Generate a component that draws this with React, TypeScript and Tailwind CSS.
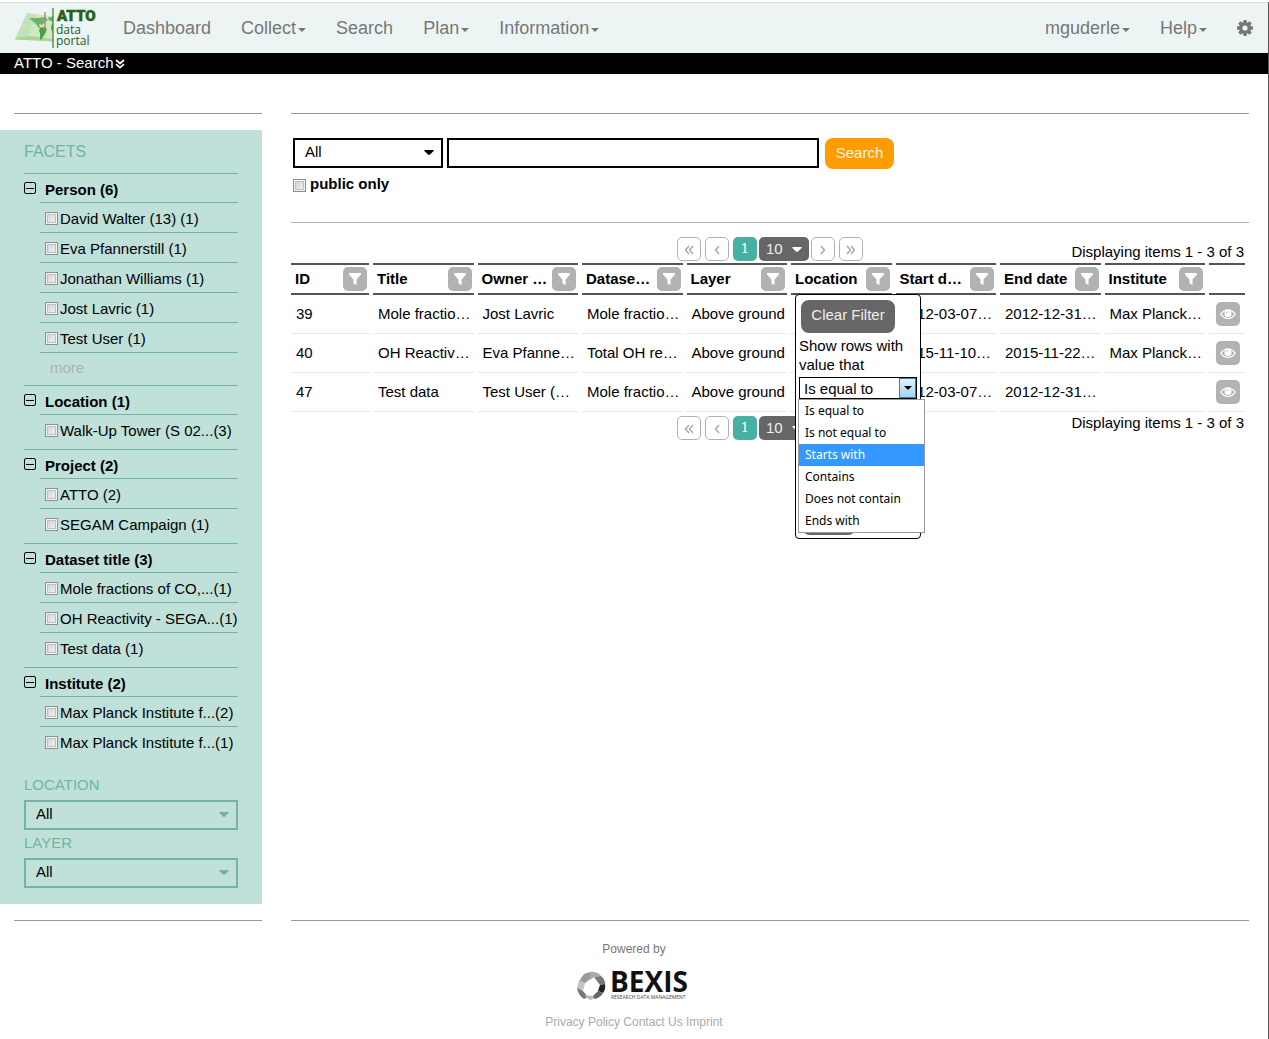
import React from "react";

type Facet = { title: string; items: string[]; more?: boolean };

const facets: Facet[] = [
  {
    title: "Person (6)",
    items: ["David Walter (13) (1)", "Eva Pfannerstill (1)", "Jonathan Williams (1)", "Jost Lavric (1)", "Test User (1)"],
    more: true,
  },
  { title: "Location (1)", items: ["Walk-Up Tower (S 02...(3)"] },
  { title: "Project (2)", items: ["ATTO (2)", "SEGAM Campaign (1)"] },
  { title: "Dataset title (3)", items: ["Mole fractions of CO,...(1)", "OH Reactivity - SEGA...(1)", "Test data (1)"] },
  { title: "Institute (2)", items: ["Max Planck Institute f...(2)", "Max Planck Institute f...(1)"] },
];

const columns = ["ID", "Title", "Owner …", "Datase…", "Layer", "Location", "Start d…", "End date", "Institute"];

const rows = [
  ["39", "Mole fractio…", "Jost Lavric", "Mole fractio…", "Above ground", "", "2012-03-07…", "2012-12-31…", "Max Planck…"],
  ["40", "OH Reactiv…", "Eva Pfanne…", "Total OH re…", "Above ground", "", "2015-11-10…", "2015-11-22…", "Max Planck…"],
  ["47", "Test data", "Test User (…", "Mole fractio…", "Above ground", "", "2012-03-07…", "2012-12-31…", ""],
];

const operators = ["Is equal to", "Is not equal to", "Starts with", "Contains", "Does not contain", "Ends with"];

function Caret({ className = "" }: { className?: string }) {
  return (
    <svg viewBox="0 0 8 4" className={`h-1 w-2 fill-current ${className}`} aria-hidden="true">
      <path d="M0 0h8L4 4z" />
    </svg>
  );
}

function WideCaret({ className = "" }: { className?: string }) {
  return (
    <svg viewBox="0 0 10 5" className={`h-[5px] w-[10px] fill-current ${className}`} aria-hidden="true">
      <path d="M1 0h8q1 0 .6 1L6 4.600q-1 .8-2 0L.4 1Q0 0 1 0z" />
    </svg>
  );
}

function AttoLogo() {
  return (
    <svg viewBox="0 0 82 42" className="h-[42px] w-[82px] overflow-visible" role="img" aria-label="ATTO data portal">
      <path d="M12 5 38 8V33L0 31z" fill="#cfe9c6" />
      <path d="M12 5 22 6.200 12 31.600 0 31z" fill="#c2e2b8" />
      <path d="M0 30 16 28l22 3v2.500L0 31.500z" fill="#a9d69b" />
      <path d="M14 10l9 0 7-1 3 3-4 3-2 2-3-1 1 3 2 1-3 0-4-5z" fill="#6db565" />
      <path d="M25 20l4-1 3 2-2 5-4 6-1-1 0-6-1-2z" fill="#4f9f49" />
      <path d="M33 9.500l5-1v5l-4-1zM36 17l2-1v9l-2-4z" fill="#6db565" />
      <path d="M30 4v17" stroke="#b08a8c" strokeWidth="1.500" />
      <path d="M38 0v40" stroke="#3c7a34" strokeWidth="1.200" />
      <g fill="#22611b" fontFamily="'Open Sans'">
        <text x="42" y="12.500" fontSize="15" fontWeight="900" fontFamily="Roboto" stroke="#22611b" strokeWidth=".5">ATTO</text>
        <text x="41" y="26" fontSize="12">data</text>
        <text x="41" y="37" fontSize="12">portal</text>
      </g>
    </svg>
  );
}

function Gear() {
  return (
    <svg viewBox="-8 -8 16 16" className="size-4 fill-current" aria-hidden="true">
      {[0, 45, 90, 135].map((a) => (
        <path key={a} d="M-2-5-1.500-8H1.500L2-5V5L1.500 8H-1.500L-2 5z" transform={`rotate(${a})`} />
      ))}
      <circle r="5.800" />
      <circle r="2.600" fill="#edf5f4" />
    </svg>
  );
}

function FilterButton({ label }: { label: string }) {
  return (
    <button aria-label={`Filter ${label}`} className="flex size-6 shrink-0 items-center justify-center rounded-[5px] bg-[#b2b2b2]">
      <svg viewBox="0 0 12 13" className="h-[13px] w-3 fill-white" aria-hidden="true">
        <path d="M0 0h12v1.500L7.500 6.500V12L4.500 10.500v-4L0 1.500z" />
      </svg>
    </button>
  );
}

function Eye() {
  return (
    <svg viewBox="0 0 16 12" className="h-3 w-4" aria-hidden="true">
      <path d="M.8 6.200C3 3 5.300 1.800 8 1.800s5 1.200 7.200 4.400C13 9.400 10.700 10.500 8 10.500S3 9.400.8 6.200z" fill="none" stroke="#fff" strokeWidth="1.200" />
      <circle cx="8" cy="5.600" r="3.500" fill="#fff" />
      <path d="M6.300 5.400A2 2 0 0 1 8 3.500" fill="none" stroke="#b2b2b2" strokeWidth=".9" />
    </svg>
  );
}

function PageButton({ label, d }: { label: string; d: string }) {
  return (
    <button aria-label={label} className="flex size-6 items-center justify-center rounded-[5px] border border-[#b2b2b2] bg-white">
      <svg viewBox="0 0 10 10" className="mt-px size-[10px] fill-none stroke-[#a5a5a5]" strokeWidth="1.400" aria-hidden="true">
        <path d={d} />
      </svg>
    </button>
  );
}

function Pager({ className }: { className: string }) {
  return (
    <div className={`grid grid-cols-[1fr_auto_1fr] ${className}`}>
      <div />
      <div className="flex">
        <div className="flex gap-1">
          <PageButton label="First page" d="M5 1 1.500 5 5 9M9 1 5.500 5 9 9" />
          <PageButton label="Previous page" d="M7 1 3.500 5 7 9" />
          <button className="size-6 rounded-[5px] bg-[#46b1a0] font-['DejaVu_Serif',serif] text-[13px] leading-6 text-white">1</button>
        </div>
        <div className="relative mx-0.5">
          <select aria-label="Items per page" className="h-6 w-[50px] appearance-none rounded-[5px] bg-[#666] pl-[7px] text-[15px] leading-6 text-[#eee]">
            <option>10</option>
          </select>
          <WideCaret className="pointer-events-none absolute top-[10px] right-[7px] text-white" />
        </div>
        <div className="flex gap-1">
          <PageButton label="Next page" d="M3 1 6.500 5 3 9" />
          <PageButton label="Last page" d="M1 1 4.500 5 1 9M5 1 8.500 5 5 9" />
        </div>
      </div>
      <p className="pr-[5px] text-right leading-4">Displaying items 1 - 3 of 3</p>
    </div>
  );
}

function FilterPopup() {
  return (
    <div className="absolute top-[29px] left-1 z-10 h-[245px] w-[126px] rounded-[4px] border border-black bg-white px-[3px] pt-[5px] text-left font-normal">
      <button className="ml-0.5 h-[33px] w-[94px] rounded-lg bg-[#666] pb-0.5 text-[#eee]">Clear Filter</button>
      <p className="mt-[3px] leading-[19px]">
        Show rows with
        <br />
        value that
      </p>
      <div className="relative mt-[3px]">
        <select aria-label="Filter operator" className="block h-[22px] w-[118px] appearance-none border border-black bg-white pl-1 text-[15px]">
          {operators.map((o) => (
            <option key={o}>{o}</option>
          ))}
        </select>
        <span className="pointer-events-none absolute top-px right-px flex h-5 w-[17px] items-center justify-center border border-[#3c7fb1] bg-linear-to-b from-[#e3f4fc] to-[#9fd5f3]">
          <Caret className="text-black" />
        </span>
        <ul role="listbox" className="absolute top-[22px] -left-px z-10 w-[127px] border border-[#999] bg-white font-['Noto_Sans',sans-serif] text-xs leading-[22px]">
          {operators.map((o) => (
            <li key={o} role="option" aria-selected={o === "Starts with"} className={o === "Starts with" ? "bg-[#3399ff] pl-1.5 text-white" : "pl-1.5"}>
              {o}
            </li>
          ))}
        </ul>
      </div>
      <button aria-label="Apply filter" className="absolute bottom-[3px] left-[6px] h-[31px] w-[54px] rounded-lg bg-[#666]" />
    </div>
  );
}

function NavItem({ children, menu }: { children: React.ReactNode; menu?: boolean }) {
  return (
    <a href="#" className="flex items-center px-[15px]">
      {children}
      {menu && <Caret className="mt-1 ml-0.5" />}
    </a>
  );
}

function CheckBox({ id, className = "" }: { id: string; className?: string }) {
  return (
    <input
      id={id}
      type="checkbox"
      className={`size-[13px] shrink-0 appearance-none border border-[#8e8f8f] bg-linear-to-br from-[#cbcfd5] to-[#f6f6f6] shadow-[inset_0_0_0_1px_#f4f4f4,inset_0_0_0_2px_#bcc0c5] ${className}`}
    />
  );
}

function SideSelect({ id, label }: { id: string; label: string }) {
  return (
    <div className="mb-1">
      <label htmlFor={id} className="block h-6 pt-px leading-4 text-[#73b3a2]">
        {label}
      </label>
      <div className="relative">
        <select id={id} className="block h-[30px] w-full appearance-none border-2 border-[#73b3a2] bg-transparent pb-0.5 pl-[10px] text-[15px]">
          <option>All</option>
        </select>
        <WideCaret className="pointer-events-none absolute top-3 right-[9px] text-[#73b3a2]" />
      </div>
    </div>
  );
}

function Sidebar() {
  return (
    <aside className="bg-[#bfe1d9] px-6 pt-3 pb-3">
      <h2 className="h-[31px] text-base leading-5 text-[#73b3a2]">FACETS</h2>
      {facets.map((f, g) => (
        <section key={f.title} className="border-t border-[#73b3a2] pb-[5px] last-of-type:pb-0">
          <h3 className="flex h-7 items-center pt-1 font-bold">
            <button aria-label={`Collapse ${f.title}`} className="mr-[9px] mb-1">
              <svg viewBox="0 0 12 12" className="size-3 fill-none stroke-black" aria-hidden="true">
                <rect x=".5" y=".5" width="11" height="11" rx="1.500" />
                <path d="M2 6.500h8" />
              </svg>
            </button>
            {f.title}
          </h3>
          <ul className="ml-4">
            {f.items.map((item, i) => (
              <li key={item} className="flex h-[30px] items-center border-t border-[#73b3a2] pt-1 pl-[5px]">
                <CheckBox id={`facet-${g}-${i}`} className="mb-0.5" />
                <label htmlFor={`facet-${g}-${i}`} className="pl-0.5 whitespace-nowrap">
                  {item}
                </label>
              </li>
            ))}
            {f.more && (
              <li className="h-7 border-t border-[#73b3a2] pt-[7px] pl-[10px] leading-4 text-[#b0b0b0]">
                <a href="#">more</a>
              </li>
            )}
          </ul>
        </section>
      ))}
      <div className="mt-5">
        <SideSelect id="location" label="LOCATION" />
        <SideSelect id="layer" label="LAYER" />
      </div>
    </aside>
  );
}

function ResultTable() {
  return (
    <table className="-ml-1 w-[calc(100%+4px)] table-fixed border-separate border-spacing-x-1 border-spacing-y-0">
      <colgroup>
        <col className="w-[78px]" />
        {columns.slice(1).map((c) => (
          <col key={c} />
        ))}
        <col className="w-9" />
      </colgroup>
      <thead>
        <tr>
          {columns.map((c) => (
            <th key={c} className="relative h-8 border-y-2 border-[#555] p-0 pr-0.5 pl-1 text-left">
              <div className="flex items-center justify-between">
                <span className="whitespace-nowrap">{c}</span>
                <FilterButton label={c} />
              </div>
              {c === "Location" && <FilterPopup />}
            </th>
          ))}
          <th aria-label="Actions" className="border-y-2 border-[#555]" />
        </tr>
      </thead>
      <tbody>
        {rows.map((r) => (
          <tr key={r[0]}>
            {r.map((cell, i) => (
              <td key={i} className="h-[39px] border-b border-[#e8e8e8] p-0 pl-[5px] whitespace-nowrap">
                {cell}
              </td>
            ))}
            <td className="border-b border-[#e8e8e8] p-0 pl-[7px]">
              <button aria-label={`View dataset ${r[0]}`} className="flex size-6 items-center justify-center rounded-[5px] bg-[#b2b2b2]">
                <Eye />
              </button>
            </td>
          </tr>
        ))}
      </tbody>
    </table>
  );
}

function BexisLogo() {
  return (
    <svg viewBox="0 0 116 32" className="h-8 w-[116px] overflow-visible" role="img" aria-label="BEXIS research data management">
      <path d="M8 3 14 1v7l-6 5-5-3z" fill="#999" />
      <path d="M3 9l6 3-2 8-6-3z" fill="#c4c4c4" />
      <path d="M1 17l6 3 5 6-4 2q-6-4-7-11z" fill="#777" />
      <path d="M8 24l9 1 4 2-7 2z" fill="#bbb" />
      <path d="M14 1q7-1 11 4l-7 1-4 3z" fill="#aaa" />
      <path d="M18 6l7-1q4 3 4 8l-5 1z" fill="#777" />
      <path d="M29 13q1 5-2 9l-5-2 2-6z" fill="#222" />
      <path d="M22 20l5 2q-2 4-8 6l-2-3z" fill="#666" />
      <g fontFamily="'Open Sans'" fill="#111">
        <text x="34" y="21" fontSize="28" fontWeight="700">BEXIS</text>
        <text x="35" y="28" fontSize="5" fontWeight="500" fill="#444" fontFamily="'Open Sans'">RESEARCH DATA MANAGEMENT</text>
      </g>
    </svg>
  );
}

export default function App() {
  return (
    <div className="min-h-screen border-r border-[#555] bg-white font-['Liberation_Sans',Arial,sans-serif] text-[15px] text-black">
      <header>
        <nav className="mt-0.5 flex h-[51px] items-stretch border-t border-[#ddd] bg-[#edf5f4] text-lg text-[#777]">
          <a href="#" className="mr-[11px] ml-[15px] flex items-start pt-[5px]">
            <AttoLogo />
          </a>
          <NavItem>Dashboard</NavItem>
          <NavItem menu>Collect</NavItem>
          <NavItem>Search</NavItem>
          <NavItem menu>Plan</NavItem>
          <NavItem menu>Information</NavItem>
          <div className="ml-auto flex">
            <NavItem menu>mguderle</NavItem>
            <NavItem menu>Help</NavItem>
            <NavItem>
              <Gear />
            </NavItem>
          </div>
        </nav>
        <div className="flex h-[21px] items-center bg-black pl-[14px] text-white">
          ATTO - Search
          <svg viewBox="0 0 10 10" className="ml-0.5 size-[10px] fill-none stroke-white" strokeWidth="1.700" aria-hidden="true">
            <path d="M1 1l4 3.500L9 1M1 5.200l4 3.500 4-3.500" />
          </svg>
        </div>
      </header>

      <div className="mt-[39px] flex">
        <div className="w-[262px] shrink-0">
          <hr className="mb-4 ml-[14px] border-[#999]" />
          <Sidebar />
          <hr className="mt-4 ml-[14px] border-[#999]" />
        </div>
        <main className="mr-[19px] ml-[29px] flex min-w-0 flex-1 flex-col">
          <hr className="border-[#999]" />
          <form className="mt-6 ml-0.5" onSubmit={(e) => e.preventDefault()}>
            <div className="flex">
              <div className="relative">
                <select aria-label="Search field" className="h-[30px] w-[150px] appearance-none border-2 border-black bg-white pb-0.5 pl-[10px] text-[15px]">
                  <option>All</option>
                </select>
                <WideCaret className="pointer-events-none absolute top-3 right-[9px]" />
              </div>
              <input aria-label="Search text" className="ml-1 h-[30px] w-[372px] border-2 border-black px-2" />
              <button className="ml-1.5 h-[31px] w-[69px] rounded-lg bg-[#ff9c00] text-[#fff4e0]">Search</button>
            </div>
            <div className="mt-[5px] flex items-center font-bold">
              <CheckBox id="public-only" className="mt-0.5" />
              <label htmlFor="public-only" className="pl-1 leading-5">
                public only
              </label>
            </div>
          </form>
          <hr className="mt-7 border-[#b2b2b2]" />
          <Pager className="mt-[14px] mb-0.5 items-end [&>p]:mb-px" />
          <ResultTable />
          <Pager className="mt-1 items-start [&>p]:mt-[-1px]" />
          <hr className="mt-auto border-[#999]" />
        </main>
      </div>

      <footer className="flex flex-col items-center pt-5 text-xs text-[#aaa]">
        <p className="leading-4 text-[#777]">Powered by</p>
        <div className="mt-[14px] mb-[11px]">
          <BexisLogo />
        </div>
        <p className="leading-4">
          <a href="#">Privacy Policy</a> <a href="#">Contact Us</a> <a href="#">Imprint</a>
        </p>
      </footer>
    </div>
  );
}
